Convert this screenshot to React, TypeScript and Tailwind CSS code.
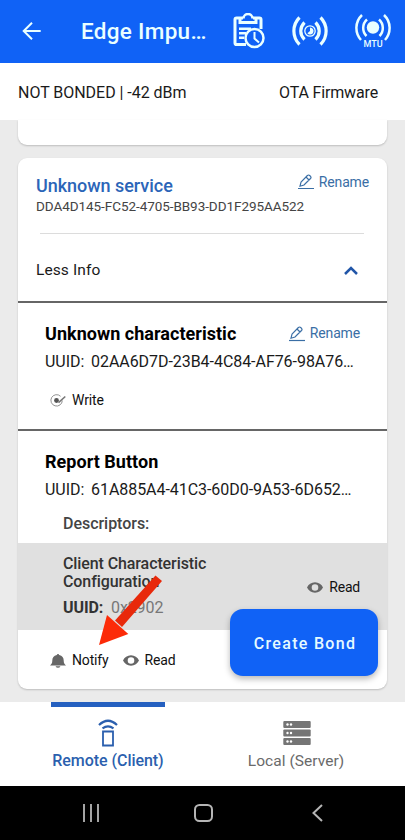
import type { ReactNode } from "react"

function Eye() {
  return (
    <svg className="h-[11px] w-[16px] shrink-0" viewBox="0 0 16 11" fill="#666">
      <path
        fillRule="evenodd"
        d="M8 0.3C4.4 0.3 1.4 2.4 0 5.5c1.4 3.1 4.4 5.200 8 5.200s6.600-2.100 8-5.200C14.600 2.400 11.600.3 8 .3zM8 2.200a3.300 3.300 0 1 1 0 6.600 3.300 3.300 0 0 1 0-6.600z"
      />
    </svg>
  )
}

function Rename({ className }: { className: string }) {
  return (
    <div className={`flex items-center text-[14px] tracking-[-0.15px] text-[#3a6ea5] ${className}`}>
      <svg className="mr-[5px] h-[16px] w-[16px]" viewBox="0 0 16 16" fill="none" stroke="#3a6ea5" strokeWidth="1.2">
        <path d="M3 8.200 9.400 1.500Q10.600.5 11.700 1.500l.8.800q1 1.100 0 2.200L6 11 2 12.200zM8 3l3 3" />
        <path d="M0 14.500h16" />
      </svg>
      <span>Rename</span>
    </div>
  )
}

function Characteristic({ name, uuid, children }: { name: string; uuid: string; children?: ReactNode }) {
  return (
    <>
      <div className="flex h-[27px] items-center justify-between pr-[27px] pl-[27px]">
        <h3 className="text-[18px] font-bold tracking-[0.03px] text-black">{name}</h3>
        {children}
      </div>
      <p className="flex h-[29px] items-center pl-[27px] text-[16px] tracking-[-0.05px] whitespace-pre text-[#1a1a1a]">
        <span className="w-[46px]">UUID:</span>
        <span>{uuid}</span>
      </p>
    </>
  )
}

export default function App() {
  return (
    <div className="relative flex h-[840px] w-[405px] flex-col overflow-hidden bg-[#ebebeb] font-['Roboto',sans-serif]">
      <header className="flex h-[62.500px] shrink-0 items-center bg-[#1062f6] text-[#eaffff]">
        <svg className="ml-[22px] h-[20px] w-[20px]" viewBox="0 0 20 20" fill="none" stroke="currentColor" strokeWidth="2">
          <path d="M18.700 10H2M10 1.700 1.700 10l8.300 8.300" />
        </svg>
        <h1 className="ml-[39px] w-[150px] pt-[2px] text-[22.500px] font-medium tracking-[0.3px]">Edge Impu…</h1>
        {/* clipboard with clock */}
        <svg className="h-[36px] w-[34px]" viewBox="0 0 34 36" fill="none" stroke="currentColor" strokeWidth="3">
          <path d="M12 5H5.600Q4 5 4 6.600V30q0 1.600 1.600 1.600H15M22 5h6.400Q30 5 30 6.600V16" />
          <path d="M9 5.500v4h16v-4" />
          <path d="M12.500 5.500a4.500 4.500 0 0 1 9 0" strokeWidth="2.500" />
          <path d="M8 15.700h12M8 20.200h7M8 24.700h5" strokeWidth="2.500" />
          <circle cx="23.500" cy="25" r="9" strokeWidth="2.500" fill="#1062f6" />
          <path d="M23.500 19v6.500l4.500 4" strokeWidth="2" />
        </svg>
        <svg className="ml-[27px] h-[32px] w-[36px]" viewBox="0 0 36 32" fill="none" stroke="currentColor" strokeWidth="3.200">
          <path d="M7.500 2.500C0 10-0 22 7.500 29.500M28.500 2.500c7.500 7.500 7.500 19.500 0 27" />
          <path d="M12.500 7.500c-5 5-5 12 0 17M23.500 7.500c5 5 5 12 0 17" />
          <circle cx="18" cy="16" r="5.200" strokeWidth="1.300" />
          <path d="M18 12.500v3.500l-2.600 2.300a3.500 3.500 0 1 0 2.600-5.800z" fill="currentColor" stroke="none" />
        </svg>
        <svg className="ml-[27px] h-[36px] w-[36px]" viewBox="0 0 36 36" fill="none" stroke="currentColor" strokeWidth="2.500">
          <path d="M7 2C-.3 9-.3 20 6 27M29 2c7.300 7 7.300 18 1 25" />
          <path d="M12 6.500C7 11 7 18.500 11.500 23M24 6.500c5 4.500 5 12 .5 16.500" />
          <circle cx="18" cy="14.500" r="6.200" fill="currentColor" stroke="none" />
          <text x="18" y="34" textAnchor="middle" fontSize="9" fontWeight="500" fill="currentColor" stroke="none">MTU</text>
        </svg>
      </header>

      <div className="flex h-[57.500px] shrink-0 items-center justify-between bg-white pt-[3px] pr-[27px] pl-[18px] text-[16px] text-[#1a1a1a]">
        <span className="tracking-[-0.03px]">NOT BONDED | -42 dBm</span>
        <span className="tracking-[-0.15px]">OTA Firmware</span>
      </div>

      <main className="flex h-[582px] shrink-0 flex-col px-[18px]">
        <div className="h-[25px] shrink-0 rounded-b-[9px] bg-white shadow-[0_1px_2px_rgba(0,0,0,0.2)]" />

        <section className="mt-[13px] h-[531px] shrink-0 overflow-hidden rounded-[9px] bg-white shadow-[0_1px_2px_rgba(0,0,0,0.2)]">
          <div className="h-[143px] pt-[13px]">
            <div className="flex h-[28px] items-center justify-between pr-[18px] pl-[18px]">
              <h2 className="text-[18px] font-medium tracking-[-0.03px] text-[#2b65b8]">Unknown service</h2>
              <Rename className="mb-[6px]" />
            </div>
            <p className="flex h-[15px] items-center pl-[18px] text-[13.500px] tracking-[-0.06px] text-[#444]">
              DDA4D145-FC52-4705-BB93-DD1F295AA522
            </p>
            <div className="mt-[19px] ml-[22px] h-px w-[324px] bg-[#dcdcdc]" />
            <div className="flex h-[74px] items-center justify-between pr-[29px] pl-[18px] text-[15.500px] tracking-[0.1px] text-[#1a1a1a]">
              <span>Less Info</span>
              <svg className="mb-px h-[9px] w-[14px]" viewBox="0 0 14 9" fill="none" stroke="#2156a8" strokeWidth="2.500">
                <path d="M1 8l6-6 6 6" />
              </svg>
            </div>
          </div>

          <div className="h-[128px] border-t-2 border-[#666] pt-[17px]">
            <Characteristic name="Unknown characteristic" uuid="02AA6D7D-23B4-4C84-AF76-98A76…">
              <Rename className="" />
            </Characteristic>
            <div className="mt-[11px] flex h-[26px] items-center pl-[32px] text-[14px] tracking-[-0.15px] text-[#111]">
              <svg className="mr-[6px] h-[13px] w-[16px]" viewBox="0 0 16 13" fill="none" stroke="#777">
                <path d="M12.300 6.500a5.700 5.700 0 1 1-1.700-4.200" strokeWidth=".8" />
                <circle cx="6.500" cy="6.500" r="2.400" fill="#555" stroke="none" />
                <path d="M8.500 8.700 15.300 2.500" strokeWidth="1.600" />
              </svg>
              Write
            </div>
          </div>

          <div className="h-[114px] border-t-2 border-[#666] pt-[17px]">
            <Characteristic name="Report Button" uuid="61A885A4-41C3-60D0-9A53-6D652…" />
            <p className="mt-[7px] flex h-[26px] items-center pl-[45px] text-[16px] font-medium tracking-[-0.03px] text-[#444]">
              Descriptors:
            </p>
          </div>

          <div className="flex h-[87px] justify-between bg-[#e0e0e0] pt-[12px] pr-[27px] pl-[45px]">
            <div className="w-[170px] text-[16px] leading-[18px] font-medium tracking-[-0.1px] text-[#333]">
              <p>Client Characteristic Configuration</p>
              <p className="mt-[8px] flex">
                <span className="w-[48px] font-bold">UUID:</span>
                <span className="font-normal text-[#777]">0x2902</span>
              </p>
            </div>
            <div className="flex h-[65px] items-center gap-[6px] text-[14px] tracking-[-0.2px] text-[#111]">
              <Eye />
              Read
            </div>
          </div>

          <div className="flex h-[59px] items-center pt-[2px] pl-[32px] text-[14px] tracking-[-0.15px] text-[#111]">
            <svg className="mr-[6px] h-[14px] w-[16px]" viewBox="0 0 16 14" fill="#666">
              <path d="M8 0a1.200 1.200 0 0 1 1.200 1.100C12.300 1.700 13.700 3.800 13.700 6.400c0 2.500.8 3.500 2.300 5H0c1.500-1.500 2.300-2.500 2.300-5C2.300 3.800 3.700 1.700 6.800 1.100A1.200 1.200 0 0 1 8 0zM5.500 12.200h5Q9.700 13.700 8 13.700t-2.500-1.500z" />
            </svg>
            <span className="mr-[14px]">Notify</span>
            <Eye />
            <span className="ml-[6px]">Read</span>
          </div>
        </section>
      </main>

      <nav className="flex h-[84px] shrink-0 bg-white">
        <div className="ml-[51px] flex w-[114px] flex-col items-center border-t-[5px] border-[#2560c0] text-[16px] font-medium tracking-[-0.05px] text-[#2b5fae]">
          <svg className="mt-[12px] h-[28px] w-[20px]" viewBox="0 0 20 28" fill="none" stroke="currentColor" strokeWidth="2.200">
            <path d="M1 6Q10-2.500 19 6M4.500 9.300q5.500-4 11 0" />
            <path d="M5 12.500h10v14H5z" strokeWidth="1.800" />
          </svg>
          <span className="mt-[5px] leading-[18px] whitespace-nowrap">Remote (Client)</span>
        </div>
        <div className="ml-[74px] flex w-[114px] flex-col items-center text-[15.500px] tracking-[0.04px] text-[#6a6a6a]">
          <svg className="mt-[19px] ml-[2px] h-[24px] w-[28px]" viewBox="0 0 28 24">
            {[0, 8.500, 17].map((y) => (
              <g key={y}>
                <rect x="0.300" y={y} width="27.400" height="7" rx="1" fill="#757575" />
                <circle cx="4.500" cy={y + 3.500} r="1.200" fill="#fff" />
                <circle cx="8" cy={y + 3.500} r="1.200" fill="#fff" />
              </g>
            ))}
          </svg>
          <span className="mt-[7px] leading-[18px] whitespace-nowrap">Local (Server)</span>
        </div>
      </nav>

      <footer className="flex h-[54px] shrink-0 items-center bg-black">
        <svg className="ml-[82px] h-[18px] w-[18px]" viewBox="0 0 18 18" stroke="#b5b5b5" strokeWidth="1.800">
          <path d="M2 0v18M9 0v18M16 0v18" />
        </svg>
        <div className="ml-[94px] h-[18px] w-[19px] rounded-[5.500px] border-2 border-[#b5b5b5]" />
        <svg className="ml-[99px] h-[18px] w-[11px]" viewBox="0 0 11 18" fill="none" stroke="#b5b5b5" strokeWidth="2">
          <path d="M10 1 1.500 9l8.500 8" />
        </svg>
      </footer>

      {/* floating action button */}
      <button className="absolute top-[609px] left-[230px] h-[67px] w-[148px] rounded-[13px] bg-[#1062f6] pt-[2px] pl-[2px] text-[16px] font-medium tracking-[1.300px] text-[#e6fbff] shadow-[0_3px_6px_rgba(0,0,0,0.28)]">
        Create Bond
      </button>

      {/* arrow pointing at Notify */}
      <svg className="absolute top-[574px] left-[96px] h-[74px] w-[68px]" viewBox="0 0 68 74">
        <path d="M59.500 1.500 66 7 26 53l-7-6.500z" fill="#e8290b" />
        <path d="M3 71 11 41 32.300 60z" fill="#fc2b08" />
      </svg>
    </div>
  )
}
